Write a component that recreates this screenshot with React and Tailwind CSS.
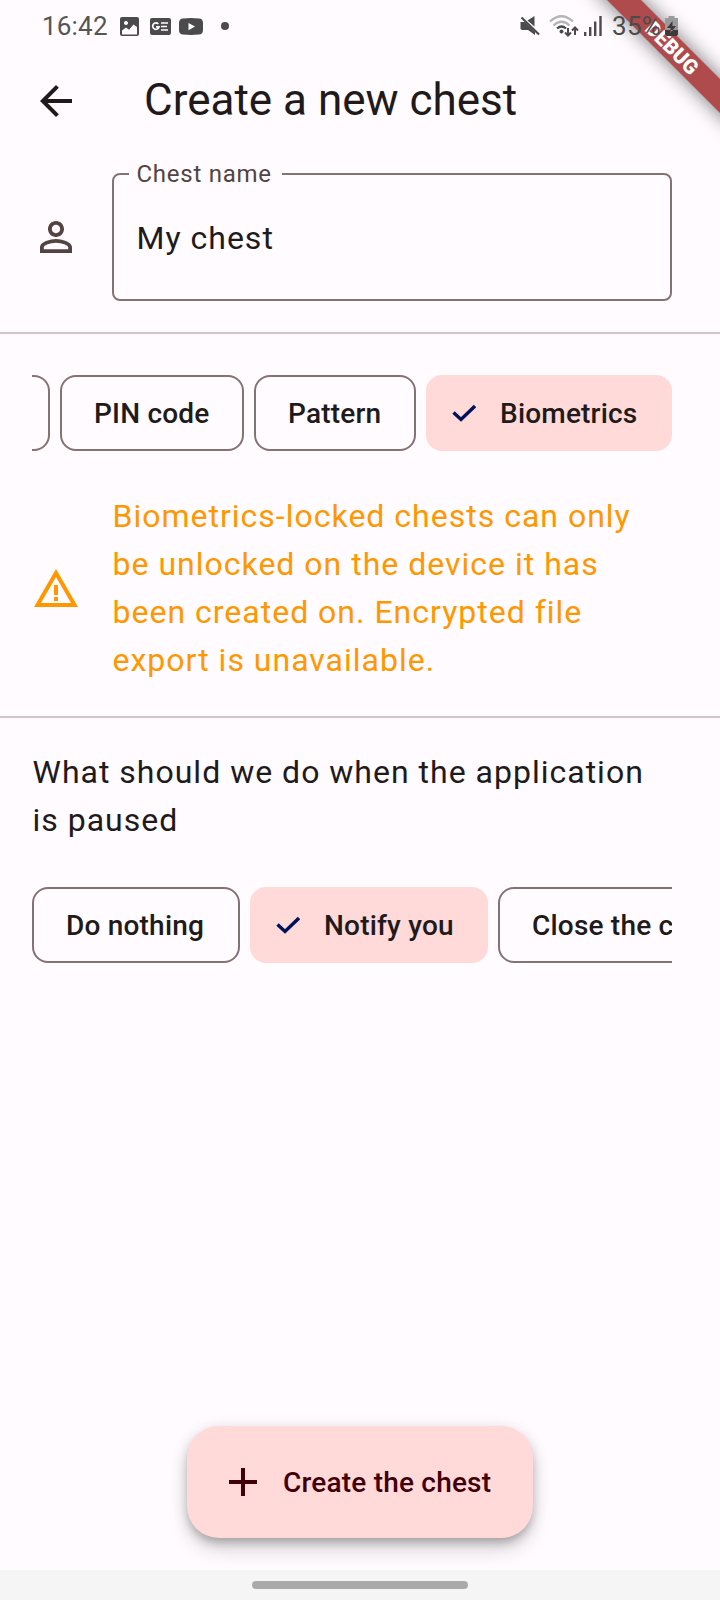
const INK = "text-[#201a1a]";

function StatusBar() {
  return (
    <div className="relative z-10 flex h-[52px] w-full shrink-0 items-center pl-[42px] pr-[42px] text-[#4b4b4b]">
      <span className="w-[68px] whitespace-nowrap text-[26px] leading-[52px] tracking-[0.2px] text-[#555555]">16:42</span>
      <svg className="ml-[10px] h-[19px] w-[19px]" viewBox="0 0 19 19">
        <path fillRule="evenodd" fill="currentColor" d="M2 0h15a2 2 0 0 1 2 2v15a2 2 0 0 1-2 2H2a2 2 0 0 1-2-2V2a2 2 0 0 1 2-2zM2 13.500v4h15v-7.500L13.500 7.500 9 12.800 6 10.500zM6 4a2 2 0 1 0 .01 0z" />
      </svg>
      <svg className="ml-[11px] h-[17px] w-[21px]" viewBox="0 0 21 17">
        <rect width="21" height="17" rx="2" fill="currentColor" />
        <path d="M8.300 6A3.200 3.200 0 1 0 9 8.800H6" fill="none" stroke="#fff" strokeWidth="1.700" />
        <path d="M11 5h7M11 8.500h6M11 12h7" stroke="#fff" strokeWidth="1.600" />
      </svg>
      <svg className="ml-[8px] h-[17px] w-[24px]" viewBox="0 0 24 17">
        <path fill="currentColor" d="M4 .4Q12-.4 20 .4 24 .6 24 5v7q0 4.300-4 4.600-8 .800-16 0Q0 16.300 0 12V5Q0 .6 4 .4z" />
        <path fill="#fff" d="M9.500 5v7.200l6.500-3.600z" />
      </svg>
      <span className="ml-[18px] h-[8px] w-[8px] rounded-full bg-current" />
      <span className="flex-1" />
      <svg className="h-[20px] w-[20px]" viewBox="0 0 20 20">
        <path fill="currentColor" d="M.5 6H5l10 9.500V19l-7-5H2L.5 13zM7.500 4.500L14.500 0v10.500z" />
        <path d="M1.500 1.500l17.500 17" stroke="currentColor" strokeWidth="2.200" />
      </svg>
      <svg className="ml-[9px] h-[22px] w-[30px]" viewBox="0 0 30 22">
        <g fill="none" strokeWidth="2.200">
          <path d="M1 6.500Q12.500-4 24 6.500M4.500 10.500Q12.500 3 20.500 10.500" stroke="#b4b4b4" />
          <path d="M8 13.500q4.500-4 9 0" stroke="currentColor" />
        </g>
        <circle cx="12.500" cy="16.500" r="2" fill="currentColor" />
        <path d="M19 13v7M16 17.500l3 3 3-3M26 20v-7M23 15.500l3-3 3 3" fill="none" stroke="currentColor" strokeWidth="2" />
      </svg>
      <svg className="ml-[5px] h-[20px] w-[18px]" viewBox="0 0 18 20">
        <path d="M1.200 16v4M6.200 11v9M11.200 5.500V20M16.500 0v20" stroke="currentColor" strokeWidth="2.400" />
      </svg>
      <span className="ml-[10px] w-[51px] whitespace-nowrap text-[26px] leading-[52px] tracking-[0.3px]">35%</span>
      <svg className="ml-[2px] h-[20px] w-[13px]" viewBox="0 0 13 20">
        <path fill="#9a9a9a" d="M3.500 0h6v2H13v12H0V2h3.500z" />
        <path fill="#3c3a3a" d="M0 14h13v4.500l-1.500 1.500h-10L0 18.500zM7.500 5L2 12h3.500v5L11 10H7.500z" />
      </svg>
    </div>
  );
}

function DebugBanner() {
  return (
    <div className="pointer-events-none absolute right-0 top-0 h-[180px] w-[180px] overflow-hidden">
      <div className="absolute left-[32px] top-[36px] flex h-[24px] w-[200px] rotate-45 items-center justify-center bg-[#b04b4d] text-[20.4px] font-black leading-none text-white shadow-[0_0_20px_rgba(0,0,0,0.55)]">
        DEBUG
      </div>
    </div>
  );
}

function Chip({ label, selected, width }) {
  if (selected) {
    return (
      <div className={`flex h-[76px] shrink-0 items-center rounded-[16px] bg-[#ffdad9] pl-[26px] ${width} ${INK}`}>
        <svg className="h-[18px] w-[24px]" viewBox="0 0 24 18">
          <path d="M1.500 8.500L9 15.500 23 2" fill="none" stroke="#001258" strokeWidth="3.400" />
        </svg>
        <span className="ml-[24px] whitespace-nowrap pt-[2px] text-[28px] font-medium leading-10 tracking-[0.2px]">{label}</span>
      </div>
    );
  }
  return (
    <div className={`flex h-[76px] shrink-0 items-center rounded-[16px] border-2 border-[#857372] pl-[32px] ${width} ${INK}`}>
      <span className="whitespace-nowrap pt-[2px] text-[28px] font-medium leading-10 tracking-[0.2px]">{label}</span>
    </div>
  );
}

export default function App() {
  return (
    <div className="relative flex h-[1600px] w-[720px] flex-col overflow-hidden bg-[#fffbff] font-['Roboto',sans-serif]">
      <StatusBar />
      <header className={`flex h-[97px] shrink-0 items-center pl-[32px] ${INK}`}>
        <svg className="h-[48px] w-[48px]" viewBox="0 0 24 24" fill="currentColor">
          <path d="M20 11H7.830l5.590-5.590L12 4l-8 8 8 8 1.410-1.410L7.830 13H20v-2z" />
        </svg>
        <h1 className="ml-[64px] whitespace-nowrap pb-[2px] text-[44px] leading-[56px]">Create a new chest</h1>
      </header>

      <section className="flex h-[183px] shrink-0 items-start pl-[32px] pr-[48px] pt-[13px]">
        <svg className="mt-[51px] h-[48px] w-[48px] text-[#534342]" viewBox="0 0 24 24" fill="currentColor">
          <path d="M12 5.900c1.160 0 2.100.940 2.100 2.100s-.940 2.100-2.100 2.100S9.900 9.160 9.900 8s.940-2.100 2.100-2.100m0 9c2.970 0 6.100 1.460 6.100 2.100v1.100H5.900V17c0-.640 3.130-2.100 6.100-2.100M12 4C9.790 4 8 5.790 8 8s1.790 4 4 4 4-1.790 4-4-1.790-4-4-4zm0 9c-2.670 0-8 1.340-8 4v3h16v-3c0-2.660-5.330-4-8-4z" />
        </svg>
        <fieldset className="ml-[32px] h-[139px] flex-1 rounded-[8px] border-2 border-[#857372] pl-[15px]">
          <legend className="h-[24px] w-[153px] whitespace-nowrap pl-[7.5px] text-[24px] leading-[24px] tracking-[0.75px] text-[#534342]">Chest name</legend>
          <div className={`pl-[7.5px] pt-[28px] text-[32px] leading-[48px] tracking-[1px] ${INK}`}>My chest</div>
        </fieldset>
      </section>
      <hr className="h-[2px] shrink-0 border-0 bg-[#d8c2c1]" />

      <div className="ml-[32px] mt-[41px] flex w-[640px] shrink-0 justify-end gap-[10px] overflow-hidden">
        <div className="h-[76px] w-[18px] shrink-0 rounded-r-[16px] border-2 border-l-0 border-[#857372]" />
        <Chip label="PIN code" width="w-[184px]" />
        <Chip label="Pattern" width="w-[162px]" />
        <Chip label="Biometrics" width="w-[246px]" selected />
      </div>

      <section className="mt-[42px] flex h-[192px] shrink-0 items-center pl-[32px] text-[#ff9800]">
        <svg className="h-[48px] w-[48px]" viewBox="0 0 24 24" fill="currentColor">
          <path d="M12 5.990L19.530 19H4.470L12 5.990M12 2L1 21h22L12 2zm1 14h-2v2h2v-2zm0-6h-2v5h2v-5z" />
        </svg>
        <p className="ml-[32.5px] whitespace-nowrap pb-[2px] text-[32px] leading-[48px] tracking-[1px]">
          Biometrics-locked chests can only
          <br />
          be unlocked on the device it has
          <br />
          been created on. Encrypted file
          <br />
          export is unavailable.
        </p>
      </section>
      <hr className="mt-[31px] h-[2px] shrink-0 border-0 bg-[#d8c2c1]" />

      <p className={`ml-[32.5px] mt-[30px] whitespace-nowrap text-[32px] leading-[48px] tracking-[1px] ${INK}`}>
        What should we do when the application
        <br />
        is paused
      </p>
      <div className="ml-[32px] mt-[43px] flex w-[640px] shrink-0 gap-[10px] overflow-hidden">
        <Chip label="Do nothing" width="w-[208px]" />
        <Chip label="Notify you" width="w-[238px]" selected />
        <Chip label="Close the chest" width="w-[270px]" />
      </div>

      <div className="flex-1" />
      <button className="mb-[32px] flex h-[112px] w-[346px] shrink-0 items-center self-center rounded-[32px] bg-[#ffdad9] pl-[32px] text-[#410008] shadow-[0_6px_10px_-2px_rgba(0,0,0,0.22),0_12px_20px_rgba(0,0,0,0.14),0_2px_16px_rgba(0,0,0,0.1)]">
        <svg className="h-[48px] w-[48px]" viewBox="0 0 24 24" fill="currentColor">
          <path d="M19 13h-6v6h-2v-6H5v-2h6V5h2v6h6v2z" />
        </svg>
        <span className="ml-[16px] whitespace-nowrap pt-[2px] text-[28px] font-medium leading-10 tracking-[0.2px]">Create the chest</span>
      </button>
      <div className="relative flex h-[30px] shrink-0 items-start justify-center bg-[#f5f5f5] pt-[11px]">
        <div className="h-[8px] w-[216px] rounded-full bg-[#aaaaaa]" />
      </div>
      <DebugBanner />
    </div>
  );
}
